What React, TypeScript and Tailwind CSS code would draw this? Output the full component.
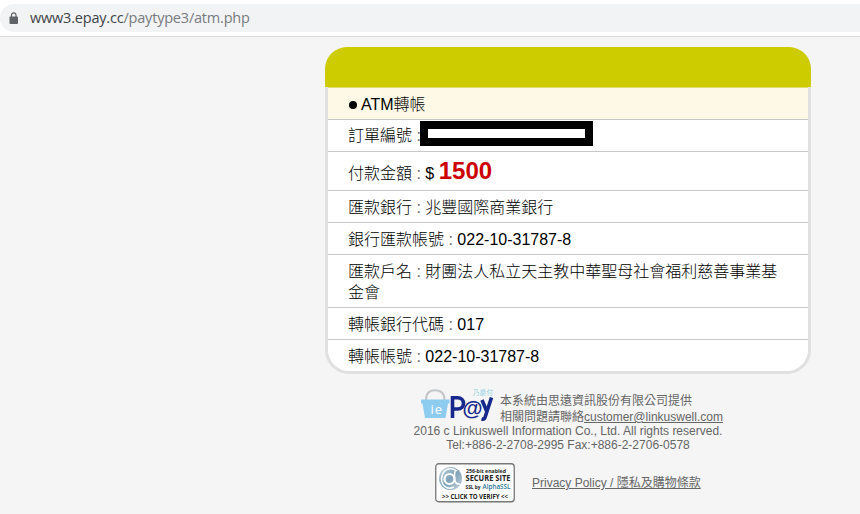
import React from 'react';

const SANS = "font-['Liberation_Sans','Noto_Sans_CJK_TC',sans-serif]";

function Lock() {
  return (
    <svg width="10" height="13" viewBox="0 0 10 13" className="block">
      <rect x="0.5" y="4.5" width="8.5" height="7.5" rx="0.9" fill="#5f6368" />
      <path d="M2.5 5V3.1a2.25 2.25 0 0 1 4.5 0V5" fill="none" stroke="#5f6368" strokeWidth="1.2" />
    </svg>
  );
}

function AddressBar() {
  return (
    <header className="h-[37px] border-b border-[#d9dbde] bg-white pt-1">
      <div className="flex h-7 items-center rounded-l-full bg-[#f1f3f4] pl-[9px]">
        <Lock />
        <span className="ml-[11px] font-['Open_Sans','Noto_Sans',sans-serif] text-[14.5px] leading-7 tracking-[-0.2px] whitespace-nowrap text-[#777b80]">
          <span className="text-[#404348]">www3.epay.cc</span>/paytype3/atm.php
        </span>
      </div>
    </header>
  );
}

function Row({ className = 'h-8 pt-1.5', children }: { className?: string; children: React.ReactNode }) {
  return <div className={`border-b border-[#c8c8c8] pl-5 pr-7 leading-[21px] ${className}`}>{children}</div>;
}

function Label({ children }: { children: React.ReactNode }) {
  return (
    <>
      {children}
      <span className="text-[#666]"> : </span>
    </>
  );
}

function PayLogo() {
  return (
    <svg width="76" height="36" viewBox="0 0 76 36" className="block">
      <path d="M6 12C6 5.500 9 2.200 15 2.200S24.500 5.500 24.500 12" fill="none" stroke="#c3c5c9" strokeWidth="2" />
      <path d="M1 11.500H29.500V15.500H28L25.500 30H5L2.500 15.500H1Z" fill="#8dccef" />
      <text x="10.500" y="25.500" fontSize="13" fill="#fff" fontFamily="Open Sans" textLength="11.500">ie</text>
      <text x="53" y="7" fontSize="6.500" fill="#8fd0e4" fontFamily="Noto Sans CJK TC" textLength="20">乃慶付</text>
      <g fill="none" stroke="#17288c" strokeWidth="3.600">
        <path d="M32.500 30V9.800H37.500C45.500 9.800 45.500 21 37.500 21H33" />
        <path d="M62 12L67 24M71.500 9.500L65 29.500C64.500 31 63.500 31.500 61.500 31" />
      </g>
      <text x="42.500" y="26.500" fontSize="21" fontWeight="bold" fill="#17288c" fontFamily="Liberation Sans" textLength="20" lengthAdjust="spacingAndGlyphs">@</text>
    </svg>
  );
}

function SecureBadge() {
  return (
    <svg width="80" height="40" viewBox="0 0 80 40" className="block">
      <defs>
        <linearGradient id="seal" x1="0" y1="0" x2="1" y2="1">
          <stop offset="0" stopColor="#c6d7e1" />
          <stop offset=".5" stopColor="#7fa3b9" />
          <stop offset="1" stopColor="#c3d2dc" />
        </linearGradient>
      </defs>
      <rect x=".75" y=".75" width="78.500" height="38" rx="3" fill="#fff" stroke="#777" strokeWidth="1.300" />
      <circle cx="15.500" cy="15.500" r="11.500" fill="url(#seal)" />
      <circle cx="14.500" cy="16" r="5" fill="none" stroke="#fff" strokeWidth="2.200" />
      <path d="M20 8C19 15 19 22 25 21M19 24C11 28 5 21 7 13S17 4 22 8" fill="none" stroke="#fff" strokeWidth="1.500" />
      <g fontFamily="Open Sans" fontWeight="bold" fill="#222">
        <text x="31" y="9.500" fontSize="6" textLength="40" lengthAdjust="spacingAndGlyphs">256-bit enabled</text>
        <text x="30.500" y="18" fontSize="8" textLength="45" lengthAdjust="spacingAndGlyphs">SECURE SITE</text>
        <text x="30.500" y="26" fontSize="6" textLength="15" lengthAdjust="spacingAndGlyphs">SSL by</text>
        <text x="47.500" y="26" fontSize="7.500" fontWeight="600" fill="#287396" textLength="28" lengthAdjust="spacingAndGlyphs">AlphaSSL</text>
        <text x="7" y="35.800" fontSize="6.500" textLength="66" lengthAdjust="spacingAndGlyphs">&gt;&gt; CLICK TO VERIFY &lt;&lt;</text>
      </g>
    </svg>
  );
}

export default function App() {
  return (
    <div className={`h-[514px] w-[860px] overflow-hidden bg-[#f5f5f5] text-black ${SANS}`}>
      <AddressBar />
      <main className="ml-[325px] w-[486px] pt-[10px]">
        <section className="h-[327px]">
          <div className="h-10 rounded-t-[22px] bg-[#cccc00]" />
          <div className="h-[287px] overflow-hidden rounded-b-[24px] border-x-[3px] border-b-[3px] border-[#e0e0e0] bg-white text-base font-light">
            <Row className="h-[33px] border-t border-t-[#dddd70] bg-[#fef9e7] pt-1.5">
              <span className="flex items-center">
                <span className="mr-[4px] ml-px h-2 w-2 rounded-full bg-black" />
                ATM轉帳
              </span>
            </Row>
            <Row className="flex h-8 pt-px">
              <span className="w-[72px] shrink-0 pt-1 whitespace-nowrap"><Label>訂單編號</Label></span>
              <span className="h-[25px] w-[173px] shrink-0 border-8 border-black bg-white" />
            </Row>
            <Row className="h-[39px] pt-2">
              <Label>付款金額</Label>$ <b className="text-2xl leading-[21px] font-bold text-[#cc0000]">1500</b>
            </Row>
            <Row><Label>匯款銀行</Label>兆豐國際商業銀行</Row>
            <Row><Label>銀行匯款帳號</Label>022-10-31787-8</Row>
            <Row className="h-[53px] pt-1.5"><Label>匯款戶名</Label>財團法人私立天主教中華聖母社會福利慈善事業基金會</Row>
            <Row><Label>轉帳銀行代碼</Label>017</Row>
            <div className="pt-1.5 pl-5 leading-[21px]"><Label>轉帳帳號</Label>022-10-31787-8</div>
          </div>
        </section>
        <footer className="pt-[14px] text-xs text-[#666]">
          <div className="flex h-[36px] pl-[95px]">
            <PayLogo />
            <p className="ml-1 pt-[5px] leading-4 whitespace-nowrap">
              本系統由思遠資訊股份有限公司提供
              <br />
              相關問題請聯絡<a className="underline">customer@linkuswell.com</a>
            </p>
          </div>
          <p className="text-center leading-[14px]">
            2016 c Linkuswell Information Co., Ltd. All rights reserved.
            <br />
            Tel:+886-2-2708-2995 Fax:+886-2-2706-0578
          </p>
          <div className="mt-[11px] flex items-center pl-[110px]">
            <SecureBadge />
            <a className="ml-[17px] whitespace-nowrap underline">Privacy Policy / 隱私及購物條款</a>
          </div>
        </footer>
      </main>
    </div>
  );
}
